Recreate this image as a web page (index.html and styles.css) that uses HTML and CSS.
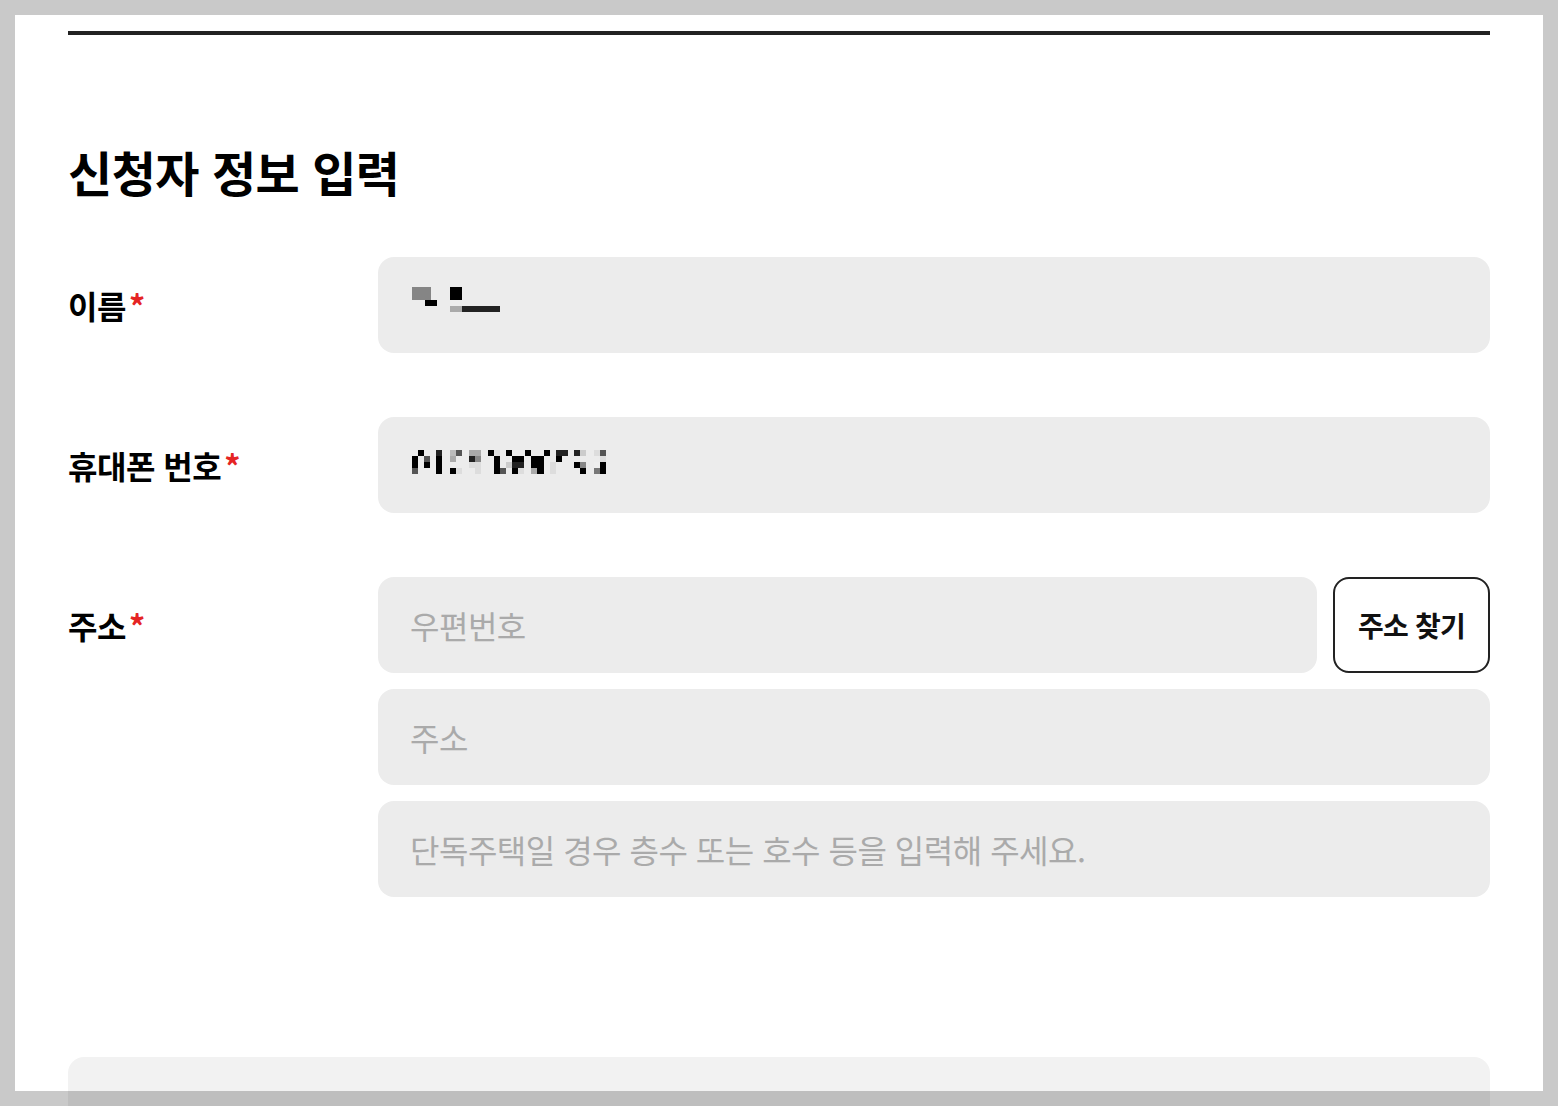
FILE: index.html
```html
<!DOCTYPE html>
<html lang="ko">
<head>
  <meta charset="utf-8">
  <title>신청자 정보 입력</title>
  <link rel="stylesheet" href="styles.css">
</head>
<body>
  <div class="screen-frame"></div>

  <main class="apply">
    <div class="apply-rule"></div>

    <h2 class="apply-title">신청자 정보 입력</h2>

    <form class="apply-form">
      <div class="form-row">
        <label class="form-label"><span>이름<span class="req">*</span></span></label>
        <div class="form-field">
          <div class="input-box">
            <svg class="mosaic" width="100" height="36" viewBox="0 0 100 36">
              <rect x="2" y="0" width="19" height="13" fill="#858585"/>
              <rect x="15" y="13" width="12" height="6" fill="#000"/>
              <rect x="40" y="0" width="12" height="13" fill="#000"/>
              <rect x="40" y="19" width="12" height="6" fill="#aaa"/>
              <rect x="52" y="19" width="38" height="6" fill="#222"/>
            </svg>
          </div>
        </div>
      </div>

      <div class="form-row">
        <label class="form-label"><span>휴대폰 번호<span class="req">*</span></span></label>
        <div class="form-field">
          <div class="input-box">
            <svg class="mosaic" width="200" height="30" viewBox="0 0 200 30">
              <!-- row 1 -->
              <rect x="8" y="0" width="6" height="6" fill="#000"/>
              <rect x="26" y="0" width="6" height="6" fill="#222"/>
              <rect x="40" y="0" width="6" height="6" fill="#bbb"/>
              <rect x="46" y="0" width="6" height="6" fill="#555"/>
              <rect x="59" y="0" width="12" height="6" fill="#aaa"/>
              <rect x="78" y="0" width="6" height="6" fill="#000"/>
              <rect x="84" y="0" width="6" height="6" fill="#ddd"/>
              <rect x="96" y="0" width="6" height="6" fill="#000"/>
              <rect x="115" y="0" width="6" height="6" fill="#000"/>
              <rect x="134" y="0" width="6" height="6" fill="#000"/>
              <rect x="146" y="0" width="12" height="6" fill="#222"/>
              <rect x="164" y="0" width="6" height="6" fill="#222"/>
              <rect x="170" y="0" width="6" height="6" fill="#ccc"/>
              <rect x="184" y="0" width="6" height="6" fill="#ddd"/>
              <rect x="190" y="0" width="6" height="6" fill="#555"/>
              <!-- row 2 -->
              <rect x="2" y="6" width="6" height="6" fill="#000"/>
              <rect x="14" y="6" width="6" height="6" fill="#555"/>
              <rect x="26" y="6" width="6" height="6" fill="#000"/>
              <rect x="40" y="6" width="6" height="6" fill="#aaa"/>
              <rect x="59" y="6" width="6" height="6" fill="#222"/>
              <rect x="65" y="6" width="6" height="6" fill="#888"/>
              <rect x="84" y="6" width="6" height="6" fill="#000"/>
              <rect x="102" y="6" width="12" height="6" fill="#000"/>
              <rect x="121" y="6" width="13" height="6" fill="#000"/>
              <rect x="146" y="6" width="6" height="6" fill="#000"/>
              <rect x="190" y="6" width="6" height="6" fill="#ddd"/>
              <!-- row 3 -->
              <rect x="2" y="12" width="6" height="6" fill="#000"/>
              <rect x="14" y="12" width="6" height="6" fill="#000"/>
              <rect x="26" y="12" width="6" height="6" fill="#000"/>
              <rect x="59" y="12" width="12" height="6" fill="#ddd"/>
              <rect x="84" y="12" width="6" height="6" fill="#000"/>
              <rect x="96" y="12" width="6" height="6" fill="#ccc"/>
              <rect x="102" y="12" width="12" height="6" fill="#222"/>
              <rect x="121" y="12" width="13" height="6" fill="#000"/>
              <rect x="140" y="12" width="6" height="6" fill="#ddd"/>
              <rect x="164" y="12" width="6" height="6" fill="#000"/>
              <rect x="170" y="12" width="6" height="6" fill="#888"/>
              <rect x="184" y="12" width="6" height="6" fill="#eee"/>
              <rect x="190" y="12" width="6" height="6" fill="#000"/>
              <!-- row 4 -->
              <rect x="2" y="18" width="6" height="6" fill="#555"/>
              <rect x="26" y="18" width="6" height="6" fill="#000"/>
              <rect x="40" y="18" width="6" height="6" fill="#000"/>
              <rect x="46" y="18" width="6" height="6" fill="#ddd"/>
              <rect x="65" y="18" width="6" height="6" fill="#ddd"/>
              <rect x="84" y="18" width="6" height="6" fill="#000"/>
              <rect x="90" y="18" width="6" height="6" fill="#555"/>
              <rect x="102" y="18" width="6" height="6" fill="#000"/>
              <rect x="108" y="18" width="6" height="6" fill="#ddd"/>
              <rect x="121" y="18" width="6" height="6" fill="#aaa"/>
              <rect x="127" y="18" width="7" height="6" fill="#000"/>
              <rect x="140" y="18" width="6" height="6" fill="#ddd"/>
              <rect x="170" y="18" width="6" height="6" fill="#000"/>
              <rect x="184" y="18" width="6" height="6" fill="#777"/>
              <rect x="190" y="18" width="6" height="6" fill="#000"/>
            </svg>
          </div>
        </div>
      </div>

      <div class="form-row">
        <label class="form-label"><span>주소<span class="req">*</span></span></label>
        <div class="form-field field-stack">
          <div class="zip-row">
            <input class="input-box" type="text" placeholder="우편번호">
            <button type="button" class="btn-find">주소 찾기</button>
          </div>
          <input class="input-box" type="text" placeholder="주소">
          <input class="input-box" type="text" placeholder="단독주택일 경우 층수 또는 호수 등을 입력해 주세요.">
        </div>
      </div>
    </form>

    <div class="apply-notice"></div>
  </main>
</body>
</html>
```

FILE: styles.css
```css
html,
body {
  margin: 0;
  background: #fff;
}

body {
  padding: 15px;
  font-family: "Noto Sans CJK KR", "Noto Sans", sans-serif;
  color: #111;
}

/* dimmed edge of the screenshot */
.screen-frame {
  position: fixed;
  inset: 0;
  border: 15px solid rgba(0, 0, 0, 0.21);
  pointer-events: none;
  z-index: 10;
}

.apply {
  padding: 16px 53px 0;
}

.apply-rule {
  height: 4px;
  background-color: #222;
}

.apply-title {
  margin: 103px 0 53px;
  font-size: 48px;
  line-height: 66px;
  font-weight: 700;
  letter-spacing: -0.5px;
  color: #000;
}

.apply-form {
  display: flex;
  flex-direction: column;
  gap: 64px;
}

.form-row {
  display: grid;
  grid-template-columns: 310px 1fr;
}

.form-label {
  display: flex;
  align-items: center;
  align-self: start;
  height: 96px;
  font-size: 32px;
  font-weight: 700;
  letter-spacing: -0.5px;
  color: #000;
}

.req {
  margin-left: 3px;
  color: #e52424;
}

.field-stack {
  display: flex;
  flex-direction: column;
  gap: 16px;
}

.zip-row {
  display: flex;
  gap: 16px;
}

.input-box {
  box-sizing: border-box;
  display: flex;
  align-items: center;
  width: 100%;
  height: 96px;
  padding: 0 32px;
  border: none;
  border-radius: 16px;
  background-color: #ececec;
  font-family: inherit;
  font-size: 32px;
  letter-spacing: -0.5px;
  color: #111;
  outline: none;
}

.input-box::placeholder {
  color: #aaa;
}

.zip-row .input-box {
  flex: 1;
}

.mosaic {
  display: block;
}

.btn-find {
  box-sizing: border-box;
  flex: 0 0 157px;
  height: 96px;
  border: 2px solid #222;
  border-radius: 16px;
  background-color: #fff;
  font-family: inherit;
  font-size: 28px;
  font-weight: 700;
  letter-spacing: -0.8px;
  color: #111;
  cursor: pointer;
}

.apply-notice {
  margin-top: 160px;
  height: 240px;
  border-radius: 16px;
  background-color: #f2f2f2;
}
```
